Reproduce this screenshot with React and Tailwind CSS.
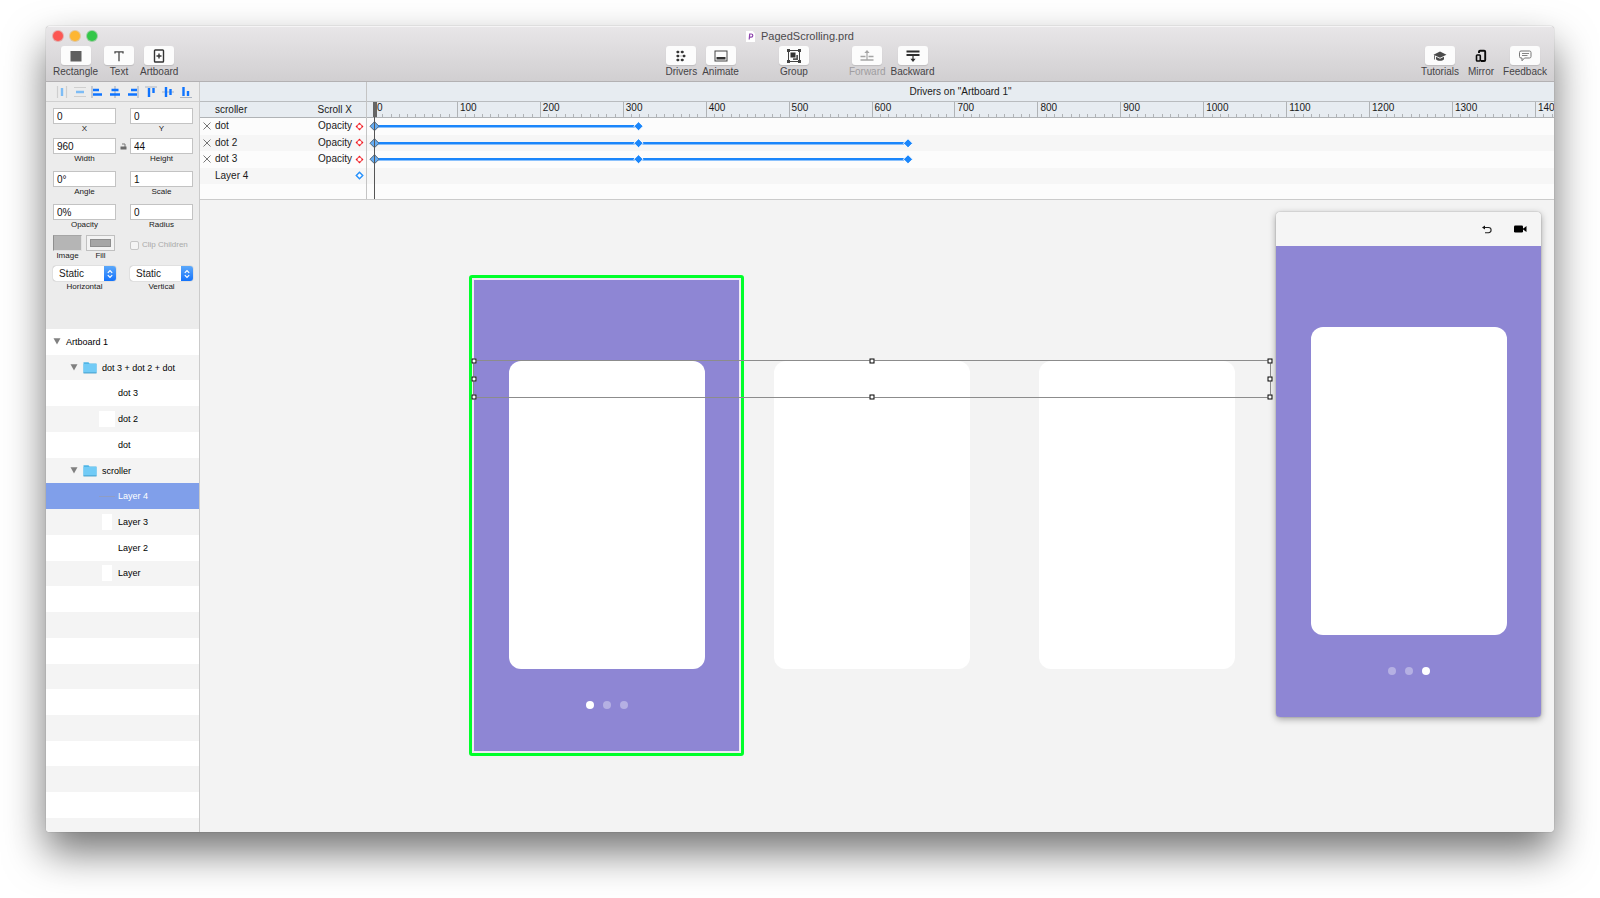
import { useState } from "react"

// ruler: how many hundreds fit between the origin and the right edge
const UNITS = 1423
const pct = (value) => `${(value / UNITS) * 100}%`

const marks = Array.from({ length: 15 }, (_, i) => i * 100)

const drivers = [
  { name: "dot", property: "Opacity", keys: [0, 319] },
  { name: "dot 2", property: "Opacity", keys: [0, 319, 644] },
  { name: "dot 3", property: "Opacity", keys: [0, 319, 644] },
  { name: "Layer 4", property: "", keys: [] },
]

const layers = [
  { name: "Artboard 1", kind: "artboard" },
  { name: "dot 3 + dot 2 + dot", kind: "folder" },
  { name: "dot 3", kind: "layer" },
  { name: "dot 2", kind: "layer", thumb: "h-4 w-4 bg-white" },
  { name: "dot", kind: "layer" },
  { name: "scroller", kind: "folder" },
  { name: "Layer 4", kind: "layer", thumb: "h-px w-4 bg-[#8f9dc4]" },
  { name: "Layer 3", kind: "layer", thumb: "h-4 w-[10px] bg-white" },
  { name: "Layer 2", kind: "layer" },
  { name: "Layer", kind: "layer", thumb: "h-4 w-[10px] bg-white" },
]

const blankRows = Array.from({ length: 9 }, (_, i) => i)

/* ---------- toolbar icons ---------- */

const RectangleIcon = () => (
  <svg width="12" height="12" viewBox="0 0 12 12"><rect x="0.5" y="1" width="11" height="10.5" fill="#5f5f5f" /></svg>
)

const TextIcon = () => (
  <svg width="12" height="12" viewBox="0 0 12 12" fill="none" stroke="#444" strokeWidth="1.3">
    <path d="M2 3.6V1.8h8v1.8M6 1.8v9.4" />
  </svg>
)

const ArtboardIcon = () => (
  <svg width="12" height="14" viewBox="0 0 12 14" fill="none" stroke="#333" strokeWidth="1.4">
    <rect x="1.5" y="1" width="9" height="12" rx="0.8" />
    <path d="M6 4.5v5M3.5 7h5" />
  </svg>
)

const DriversIcon = () => (
  <svg width="12" height="12" viewBox="0 0 12 12" fill="#333" stroke="#777">
    <path d="M2 2h7M2 6h8M2 10h7" strokeWidth="0.5" />
    <g stroke="none">
      <rect x="1.5" y="0.8" width="2.6" height="2.4" rx="0.8" />
      <rect x="6" y="0.8" width="2.6" height="2.4" rx="0.8" />
      <rect x="1.5" y="4.8" width="2.600" height="2.4" rx="0.8" />
      <rect x="7.800" y="4.8" width="2.600" height="2.4" rx="0.8" />
      <rect x="1.5" y="8.8" width="2.600" height="2.4" rx="0.8" />
      <rect x="6" y="8.8" width="2.600" height="2.4" rx="0.8" />
    </g>
  </svg>
)

const AnimateIcon = () => (
  <svg width="14" height="12" viewBox="0 0 14 12">
    <rect x="1" y="1" width="12" height="10" fill="none" stroke="#444" />
    <rect x="2.5" y="7" width="9" height="2.5" fill="#333" />
  </svg>
)

const GroupIcon = () => (
  <svg width="14" height="14" viewBox="0 0 14 14">
    <rect x="1.5" y="1.5" width="11" height="11" fill="none" stroke="#444" />
    <path d="M0 0h3v3H0zM11 0h3v3h-3zM0 11h3v3H0zM11 11h3v3h-3z" fill="#444" />
    <path d="M3.5 3.5h5v5h-5z" fill="#333" />
    <path d="M9.3 6H11v5H6V9.3h3.3z" fill="#555" />
  </svg>
)

const ForwardIcon = () => (
  <svg width="14" height="12" viewBox="0 0 14 12" fill="none" stroke="#a5a5a5">
    <path d="M7 10V1.5" strokeWidth="1.2" />
    <path d="M7 0L4.4 3h5.2z" fill="#a5a5a5" stroke="none" />
    <path d="M0.5 6.5h5M8.5 6.5h5M0.5 10h13" strokeWidth="1.4" />
  </svg>
)

const BackwardIcon = () => (
  <svg width="14" height="12" viewBox="0 0 14 12" fill="none" stroke="#2f2f2f">
    <path d="M0.5 1.5h13M0.5 5h13" strokeWidth="1.8" />
    <path d="M7 5v5" strokeWidth="1.2" />
    <path d="M7 12L4.4 8.8h5.2z" fill="#2f2f2f" stroke="none" />
  </svg>
)

const TutorialsIcon = () => (
  <svg width="14" height="12" viewBox="0 0 14 12" fill="#4a4a4a">
    <path d="M7 1.5L0.5 4.7 7 7.8l6.5-3.1z" />
    <path d="M3 6.8v2.5c1.8 2 6.2 2 8 0V6.8L7 8.8z" />
    <path d="M1.2 5v4.5H2V5.4z" />
  </svg>
)

const MirrorIcon = () => (
  <svg width="12" height="14" viewBox="0 0 12 14" fill="none" stroke="#0a0a0a" strokeWidth="1.9">
    <path d="M4 4V2.7a1 1 0 0 1 1-1h4.2a1 1 0 0 1 1 1V11a1 1 0 0 1-1 1H6" />
    <rect x="1.5" y="6" width="3.8" height="6" rx="0.8" strokeWidth="1.6" />
  </svg>
)

const FeedbackIcon = () => (
  <svg width="14" height="12" viewBox="0 0 14 12" fill="none" stroke="#777">
    <path d="M3 1h8.5A1.5 1.5 0 0 1 13 2.5v4A1.5 1.5 0 0 1 11.5 8h-5L4 10.8V8H3a1.5 1.5 0 0 1-1.5-1.5v-4A1.5 1.5 0 0 1 3 1z" />
    <path d="M4 3.5h7M4 5.5h5.5" strokeWidth="0.9" />
  </svg>
)

const ToolButton = ({ label, icon, plain, disabled }) => (
  <button type="button" disabled={disabled} className={`flex min-w-[26px] flex-col items-center whitespace-nowrap text-[10px] leading-[13px] ${disabled ? "text-[#9f9da0]" : "text-[#454346]"}`}>
    <span className={`flex h-[19px] items-center justify-center ${plain ? "w-[26px]" : "w-[30px] rounded-[3px] bg-[#fcfcfc] shadow-[0_1px_1px_rgba(0,0,0,0.12)]"}`}>
      {icon}
    </span>
    <span>{label}</span>
  </button>
)

function Toolbar() {
  return (
    <header className="h-[56px] flex-none border-t border-b border-t-[#f5f4f5] border-b-[#b3b1b3] bg-linear-to-b from-[#e8e6e8] to-[#d1cfd1]">
      <div className="mb-px grid h-[18px] grid-cols-[1fr_auto_1fr] items-center px-[7px]">
        <div className="flex gap-[7px]">
          <button type="button" aria-label="Close" className="h-[10px] w-[10px] rounded-full bg-[#fc5753] ring-1 ring-[#e0605a]/40"></button>
          <button type="button" aria-label="Minimize" className="h-[10px] w-[10px] rounded-full bg-[#fdb633] ring-1 ring-[#dca03a]/40"></button>
          <button type="button" aria-label="Zoom" className="h-[10px] w-[10px] rounded-full bg-[#33c748] ring-1 ring-[#2fae42]/40"></button>
        </div>
        <h1 className="flex items-center gap-[6px] text-[11px] leading-[14px] text-[#4b494c]">
          <svg width="9" height="11" viewBox="0 0 9 11">
            <path d="M0 0h6.5L9 2.5V11H0z" fill="#fff" />
            <path d="M3.2 8.5L3.7 3h1.500a1.500 1.500 0 0 1 0 3.200H3.600" fill="none" stroke="#8e44ad" strokeWidth="1.2" />
          </svg>
          PagedScrolling.prd
        </h1>
      </div>
      <div className="grid grid-cols-[1fr_auto_1fr] px-[7px]">
        <div className="flex gap-[6px]">
          <ToolButton label="Rectangle" icon={<RectangleIcon />} />
          <ToolButton label="Text" icon={<TextIcon />} />
          <ToolButton label="Artboard" icon={<ArtboardIcon />} />
        </div>
        <div className="flex gap-10">
          <div className="flex gap-[5px]">
            <ToolButton label="Drivers" icon={<DriversIcon />} />
            <ToolButton label="Animate" icon={<AnimateIcon />} />
          </div>
          <ToolButton label="Group" icon={<GroupIcon />} />
          <div className="flex gap-[5px]">
            <ToolButton label="Forward" icon={<ForwardIcon />} disabled />
            <ToolButton label="Backward" icon={<BackwardIcon />} />
          </div>
        </div>
        <div className="flex justify-end gap-[9px]">
          <ToolButton label="Tutorials" icon={<TutorialsIcon />} />
          <ToolButton label="Mirror" icon={<MirrorIcon />} plain />
          <ToolButton label="Feedback" icon={<FeedbackIcon />} />
        </div>
      </div>
    </header>
  )
}

/* ---------- inspector ---------- */

// grey is the guide line, blue are the bars lined up on it
const alignments = [
  { label: "Distribute horizontally", guide: "M1.5 0v12M10.5 0v12", bars: "M6 2v8", faded: true },
  { label: "Distribute vertically", guide: "M0 1.5h12M0 10.5h12", bars: "M2 6h8", faded: true },
  { label: "Align left", guide: "M1 0v12", bars: "M2 4h6M2 8.5h9" },
  { label: "Align center", guide: "M6 0v12", bars: "M2.5 4h7M1 8.5h10" },
  { label: "Align right", guide: "M11 0v12", bars: "M4 4h6M1 8.5h9" },
  { label: "Align top", guide: "M0 1h12", bars: "M4 2v9M8.5 2v5" },
  { label: "Align middle", guide: "M0 6h12", bars: "M4 1v10M8.5 3v6" },
  { label: "Align bottom", guide: "M0 11.5h12", bars: "M3.5 1v9M8 5v5" },
]

const AlignBar = () => (
  <div className="flex h-5 flex-none items-center justify-between border-b border-[#d0d0d0] pr-[7px] pl-[10px]">
    {alignments.map((a) => (
      <button type="button" key={a.label} aria-label={a.label}>
        <svg width="12" height="12" viewBox="0 0 12 12" fill="none">
          <path d={a.guide} stroke={a.faded ? "#cfcfcf" : "#a9b3c1"} strokeWidth="1.2" />
          <path d={a.bars} stroke={a.faded ? "#7dbcf5" : "#0f74ff"} strokeWidth="2.4" />
        </svg>
      </button>
    ))}
  </div>
)

const Field = ({ id, label, value }) => (
  <div className="flex min-w-0 flex-col">
    <input id={id} defaultValue={value} className="h-4 w-full border border-[#c3c3c3] bg-white px-[3px] text-[10px] leading-[14px] text-[#111] outline-none" />
    <label htmlFor={id} className="text-center text-[8px] leading-[10px]">{label}</label>
  </div>
)

const SelectField = ({ id, label }) => (
  <div className="flex min-w-0 flex-col">
    <div className="relative">
      <select id={id} defaultValue="Static" className="block h-[15px] w-full appearance-none rounded-[3px] bg-white pl-[6px] text-[10px] leading-[15px] shadow-[0_0_1px_rgba(0,0,0,0.5)] outline-none">
        <option>Static</option>
        <option>Pinned</option>
      </select>
      <span className="pointer-events-none absolute inset-y-0 right-0 flex w-3 items-center justify-center rounded-r-[3px] bg-linear-to-b from-[#5ba8fa] to-[#1172fb]">
        <svg width="8" height="10" viewBox="0 0 8 10" fill="none" stroke="#fff" strokeWidth="1.2">
          <path d="M1.8 3.8L4 1.600l2.200 2.200M1.800 6.200L4 8.400l2.200-2.200" />
        </svg>
      </span>
    </div>
    <label htmlFor={id} className="mt-[1px] text-center text-[8px] leading-[10px]">{label}</label>
  </div>
)

function Inspector() {
  return (
    <form className="h-[227px] flex-none pt-[6px] pr-[6px] pl-[7px] text-[#1a1a1a]">
      <div className="grid grid-cols-[1fr_14px_1fr]">
        <Field id="pos-x" label="X" value="0" />
        <span></span>
        <Field id="pos-y" label="Y" value="0" />
      </div>
      <div className="mt-1 grid grid-cols-[1fr_14px_1fr]">
        <Field id="width" label="Width" value="960" />
        <svg className="mt-[5px] justify-self-center" width="7" height="7" viewBox="0 0 7 7">
          <path d="M2 1h3v3" fill="none" stroke="#777" />
          <rect x="0.5" y="3.5" width="6" height="3" fill="#6b6b6b" />
        </svg>
        <Field id="height" label="Height" value="44" />
      </div>
      <div className="mt-[7px] grid grid-cols-[1fr_14px_1fr]">
        <Field id="angle" label="Angle" value="0°" />
        <span></span>
        <Field id="scale" label="Scale" value="1" />
      </div>
      <div className="mt-[7px] grid grid-cols-[1fr_14px_1fr]">
        <Field id="opacity" label="Opacity" value="0%" />
        <span></span>
        <Field id="radius" label="Radius" value="0" />
      </div>
      <div className="mt-[5px] grid grid-cols-[1fr_14px_1fr]">
        <div className="flex gap-1 text-[8px] leading-[10px]">
          <button type="button" className="flex w-[29px] flex-col items-center">
            <span className="block h-4 w-full border border-t-[#a5a5a5] border-r-[#e2e2e2] border-b-[#e2e2e2] border-l-[#8f8f8f] bg-[#b5b5b5]"></span>
            Image
          </button>
          <button type="button" className="flex w-[29px] flex-col items-center">
            <span className="block h-4 w-full border border-[#c0c0c0] bg-[#f3f3f3] p-[3px]">
              <span className="block h-full border border-[#8e8e8e] bg-[#a6a6a6]"></span>
            </span>
            Fill
          </button>
        </div>
        <span></span>
        <label className="flex h-5 items-center gap-[3px] text-[8px] whitespace-nowrap text-[#a9a9a9]">
          <input type="checkbox" disabled className="h-[9px] w-[9px] flex-none appearance-none rounded-[2px] border border-[#c6c6c6] bg-[#f4f4f4]" />
          Clip Children
        </label>
      </div>
      <div className="mt-[5px] grid grid-cols-[1fr_14px_1fr]">
        <SelectField id="horizontal" label="Horizontal" />
        <span></span>
        <SelectField id="vertical" label="Vertical" />
      </div>
    </form>
  )
}

/* ---------- layer list ---------- */

const Triangle = () => (
  <svg className="flex-none" width="8" height="7" viewBox="0 0 8 7"><path d="M0.500 0.300h7L4 6.500z" fill="#808080" /></svg>
)

const Folder = () => (
  <svg className="flex-none" width="14" height="13" viewBox="0 0 14 13">
    <path d="M0.5 1.2h5l1 1.3h7V12h-13z" fill="#4fb5e6" />
    <path d="M0.5 3h13v8.5h-13z" fill="#72cbf6" />
    <path d="M0.5 12h13" stroke="#4a9fc9" strokeWidth="0.9" />
  </svg>
)

function LayerList() {
  const [selected, setSelected] = useState(6)

  return (
    <div className="flex min-h-0 flex-1 flex-col bg-white">
      {layers.map((layer, i) => (
        <button
          type="button"
          key={i}
          onClick={() => setSelected(i)}
          className={`flex flex-1 items-center text-left text-[9px] leading-3 ${selected === i ? "bg-[#809fea] text-white" : i % 2 ? "bg-[#f4f4f4] text-black" : "bg-white text-black"}`}
        >
          {layer.kind === "artboard" && (
            <span className="flex items-center gap-[5px] pl-[7px]"><Triangle />{layer.name}</span>
          )}
          {layer.kind === "folder" && (
            <span className="flex items-center gap-[5px] pl-6"><Triangle /><Folder />{layer.name}</span>
          )}
          {layer.kind === "layer" && (
            <span className="flex items-center gap-[3px] pl-[53px]">
              <span className="flex h-4 w-4 items-center justify-center">
                {layer.thumb && <span className={layer.thumb}></span>}
              </span>
              {layer.name}
            </span>
          )}
        </button>
      ))}
      {blankRows.map((i) => (
        <div key={i} className={`flex-1 ${i % 2 ? "bg-[#f4f4f4]" : "bg-white"}`}></div>
      ))}
      <div className="h-[14px] flex-none bg-[#f4f4f4]"></div>
    </div>
  )
}

/* ---------- drivers timeline ---------- */

const PropertyDiamond = ({ active }) => (
  <svg className="flex-none" width="9" height="9" viewBox="0 0 9 9">
    <path d="M4.5 1.3L7.7 4.5 4.5 7.7 1.3 4.5z" fill="#fff" stroke={active ? "#f76a6e" : "#2a92fb"} strokeWidth={active ? "1.1" : "1.5"} />
    {active && (
      <path d="M3 2.4L4.5 0.700 6 2.400zM3 6.600L4.500 8.300 6 6.600zM2.400 3L0.700 4.500 2.400 6zM6.600 3L8.300 4.500 6.600 6z" fill="#f0141c" />
    )}
  </svg>
)

const Track = ({ keys }) => (
  <svg className="block h-full w-full overflow-visible">
    {keys.length > 0 && (
      <line x1="0" x2={pct(keys[keys.length - 1])} y1="50%" y2="50%" stroke="#1a86fb" strokeWidth="2.5" />
    )}
    {keys.map((key) => (
      <svg key={key} x={pct(key)} y="50%" className="overflow-visible">
        {key === 0
          ? <path d="M0.500-4.500L5 0 0.500 4.500-4 0z" fill="#66aef5" stroke="#4f6478" />
          : <path d="M0-4.6L4.6 0 0 4.6-4.6 0z" fill="#1a86fb" stroke="#fff" />}
      </svg>
    ))}
  </svg>
)

function Drivers() {
  return (
    <section className="flex h-[118px] flex-none border-b border-[#cbcbcb] bg-[#fcfcfc] text-[10px] leading-3 text-[#1a1a1a]">
      <div className="flex w-[167px] flex-none flex-col border-r border-[#c4c4c4]">
        <div className="h-5 flex-none border-b border-[#b9bcbf] bg-[#e7ecf1]"></div>
        <div className="flex h-4 flex-none items-center justify-between border-b border-[#b0b3b6] bg-[#e7ecf1] pr-[14px] pl-[15px]">
          <span>scroller</span>
          <span>Scroll X</span>
        </div>
        <ul className="flex h-[66px] flex-none flex-col">
          {drivers.map((d, i) => (
            <li key={d.name} className={`flex flex-1 items-center pr-[2px] pl-[3px] ${i % 2 ? "bg-[#f6f6f6]" : "bg-[#fcfcfc]"}`}>
              <span className="mr-1 flex h-2 w-2">
                {d.property && (
                  <button type="button" aria-label={`Remove ${d.name}`}>
                    <svg width="8" height="8" viewBox="0 0 8 8" stroke="#666" strokeWidth="0.9"><path d="M0.5 0.5l7 7M7.5 0.5l-7 7" /></svg>
                  </button>
                )}
              </span>
              <span className="flex-1">{d.name}</span>
              <span className="mr-[3px]">{d.property}</span>
              <PropertyDiamond active={!!d.property} />
            </li>
          ))}
        </ul>
      </div>

      <div className="flex min-w-0 flex-1 flex-col">
        <h2 className="h-5 flex-none border-b border-[#b9bcbf] bg-[#e7ecf1] pt-1 text-center">Drivers on "Artboard 1"</h2>
        <div className="relative flex min-h-0 flex-1 flex-col">
          <div className="flex h-4 flex-none overflow-hidden border-b border-[#b0b3b6] bg-[#e7ecf1] pl-[7px]">
            {marks.map((mark) => (
              <div key={mark} className="relative h-full flex-none border-l border-[#b0b3b6]" style={{ width: pct(100) }}>
                <div className="absolute inset-x-0 bottom-0 flex h-[3px]">
                  {Array.from({ length: 10 }, (_, i) => (
                    <span key={i} className={`flex-1 ${i < 9 ? "border-r border-[#b0b3b6]" : ""}`}></span>
                  ))}
                </div>
                <span className="relative block pl-[2px]">{mark}</span>
              </div>
            ))}
          </div>
          <div className="flex h-[66px] flex-none flex-col">
            {drivers.map((d, i) => (
              <div key={d.name} className={`min-h-0 flex-1 pl-[7px] ${i % 2 ? "bg-[#f6f6f6]" : "bg-[#fcfcfc]"}`}>
                <Track keys={d.keys} />
              </div>
            ))}
          </div>
          {/* playhead */}
          <div className="absolute inset-y-0 left-[5px] flex w-[5px] flex-col items-center">
            <span className="h-[15px] w-1 bg-[#666]"></span>
            <span className="w-px flex-1 bg-[#555]"></span>
          </div>
        </div>
      </div>
    </section>
  )
}

/* ---------- canvas ---------- */

const Screen = ({ page }) => (
  <div className="flex flex-col items-center bg-[#8e86d4] pt-[81px] pb-[42px]">
    <div className="h-[308px] w-[196px] rounded-[12px] bg-white"></div>
    <div className="mt-8 flex gap-[9px]">
      {[0, 1, 2].map((i) => (
        <span key={i} className={`h-2 w-2 rounded-full ${i === page ? "bg-white" : "bg-white/35"}`}></span>
      ))}
    </div>
  </div>
)

const handles = [
  "left-0 top-0", "left-1/2 top-0", "left-full top-0",
  "left-0 top-1/2", "left-full top-1/2",
  "left-0 top-full", "left-1/2 top-full", "left-full top-full",
]

function Canvas() {
  return (
    <main className="relative min-h-0 flex-1 overflow-hidden bg-[#f3f3f3]">
      <div className="absolute top-[75px] left-[269px] w-[275px] rounded-[3px] border-3 border-[#00ff2a] bg-[#efeaf4] p-[2px]">
        <Screen page={0} />
      </div>
      <div className="absolute top-[161px] left-[574px] h-[308px] w-[196px] rounded-[12px] bg-white"></div>
      <div className="absolute top-[161px] left-[839px] h-[308px] w-[196px] rounded-[12px] bg-white"></div>

      <div className="absolute top-[160px] left-[273px] h-[38px] w-[798px] border border-[#8c8c8c]">
        {handles.map((place) => (
          <span key={place} className={`absolute h-[5px] w-[5px] -translate-x-1/2 -translate-y-1/2 border border-black bg-white ${place}`}></span>
        ))}
      </div>

      <aside className="absolute top-3 right-[13px] w-[265px] overflow-hidden rounded-[4px] shadow-[0_2px_7px_rgba(0,0,0,0.35),0_0_1px_rgba(0,0,0,0.5)]">
        <div className="flex h-[34px] items-center justify-end gap-[22px] bg-[#f5f5f5] pr-[14px]">
          <button type="button" aria-label="Restart">
            <svg width="10" height="9" viewBox="0 0 10 9" fill="none" stroke="#222" strokeWidth="1.1">
              <path d="M2 2.5h4.5a2.5 2.5 0 0 1 0 5.2H3" />
              <path d="M0 2.5L3 0.500v4z" fill="#111" stroke="none" />
            </svg>
          </button>
          <button type="button" aria-label="Record">
            <svg width="13" height="8" viewBox="0 0 13 8" fill="#000">
              <rect x="0" y="0.5" width="9" height="7" rx="1.3" />
              <path d="M8.5 4L12.5 1v6z" />
            </svg>
          </button>
        </div>
        <Screen page={2} />
      </aside>
    </main>
  )
}

export default function App() {
  return (
    <div className="flex h-screen min-h-[720px] bg-white px-[46px] pt-[26px] pb-[66px] font-['Helvetica_Neue','Liberation_Sans',Arial,sans-serif]">
      <div className="flex min-w-0 flex-1 flex-col overflow-hidden rounded-[4px] bg-[#ececec] shadow-[0_20px_40px_rgba(0,0,0,0.55),0_0_1px_rgba(0,0,0,0.5)]">
        <Toolbar />
        <div className="flex min-h-0 flex-1">
          <div className="flex w-[154px] flex-none flex-col border-r border-[#cbcbcb] bg-[#ececec]">
            <AlignBar />
            <Inspector />
            <LayerList />
          </div>
          <div className="flex min-w-0 flex-1 flex-col">
            <Drivers />
            <Canvas />
          </div>
        </div>
      </div>
    </div>
  )
}
